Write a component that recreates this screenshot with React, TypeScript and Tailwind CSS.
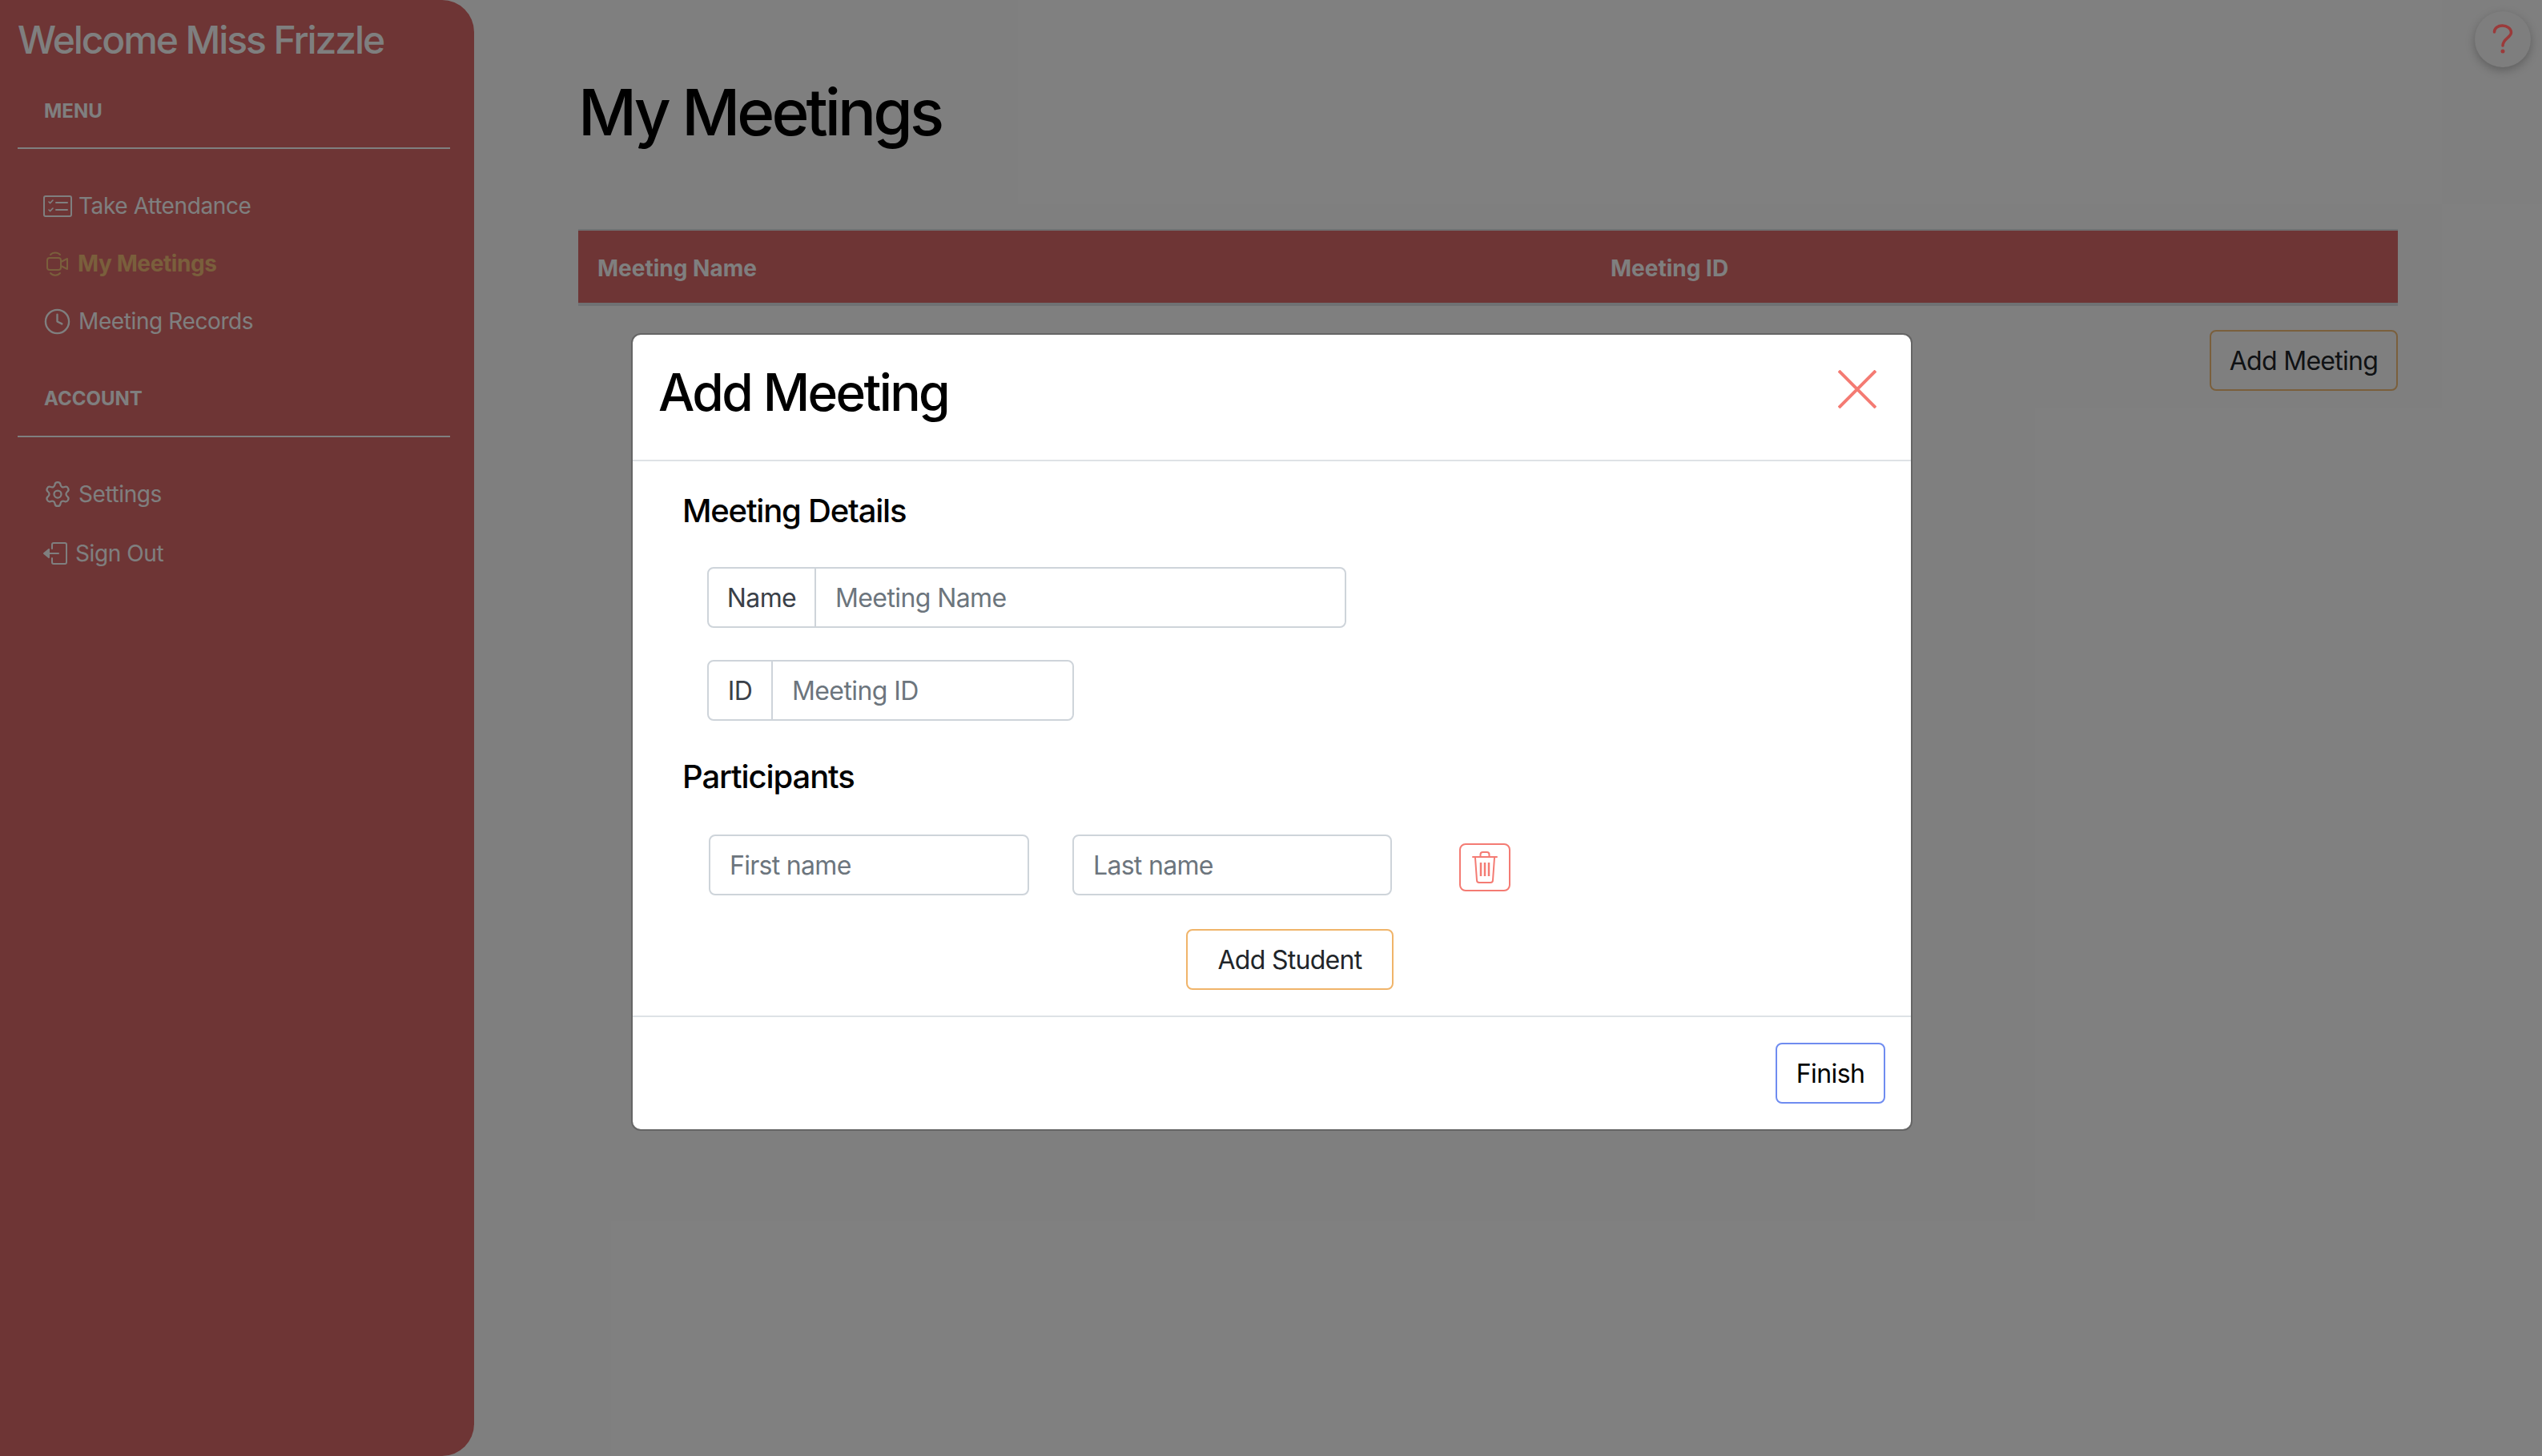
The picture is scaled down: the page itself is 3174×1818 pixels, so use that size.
// My Meetings page with the Add Meeting modal open
import React from 'react'
import { Clock, Settings } from 'lucide-react'

const ChecklistIcon = () => (
  <svg width="36" height="27" viewBox="0 0 36 27" fill="none" stroke="currentColor" strokeWidth="2" strokeLinecap="round" strokeLinejoin="round" className="shrink-0">
    <rect x="1" y="1" width="34" height="25" rx="2" />
    <path d="M7 8l1.6 1.6L12 6M7 18l1.6 1.6L12 16" strokeWidth="1.6" />
    <path d="M16 9h14M16 18h14" />
  </svg>
)

const VideoIcon = () => (
  <svg width="28" height="32" viewBox="0 0 28 32" fill="none" stroke="currentColor" strokeWidth="2" strokeLinecap="round" strokeLinejoin="round" className="shrink-0">
    <rect x="1" y="9" width="17" height="15" rx="3" />
    <path d="M18 14l8-4v13l-8-4" />
    <path d="M5 5c3-3.5 9-3.5 12 0M5 28c3 3.5 9 3.5 12 0" />
  </svg>
)

const SignOutIcon = () => (
  <svg width="30" height="28" viewBox="0 0 30 28" fill="none" stroke="currentColor" strokeWidth="2" strokeLinecap="round" strokeLinejoin="round" className="shrink-0">
    <path d="M11 8V3a2 2 0 0 1 2-2h14a2 2 0 0 1 2 2v22a2 2 0 0 1-2 2H13a2 2 0 0 1-2-2v-5" />
    <path d="M19 14H6" />
    <path d="M7 9v10l-6-5z" fill="currentColor" />
  </svg>
)

const TrashIcon = () => (
  <svg width="32" height="40" viewBox="0 0 32 40" fill="none" stroke="currentColor" strokeWidth="2" strokeLinecap="round" strokeLinejoin="round">
    <path d="M1 7h30" />
    <path d="M10.500 6V4a3 3 0 0 1 3-3h5a3 3 0 0 1 3 3v2" />
    <path d="M4 8l2 28a3 3 0 0 0 3 3h14a3 3 0 0 0 3-3l2-28" />
    <path d="M11 14v17M16 14v17M21 14v17" strokeLinecap="butt" strokeWidth="2.500" />
  </svg>
)

const menuItems = [
  { label: 'Take Attendance', icon: <ChecklistIcon />, pad: 'pl-[32px] gap-[8px]' },
  { label: 'My Meetings', icon: <VideoIcon />, active: true, pad: 'pl-[36px] gap-[11px]' },
  { label: 'Meeting Records', icon: <Clock size={35} strokeWidth={1.6} className="shrink-0" />, pad: 'pl-[32px] gap-[9px]' },
]

const accountItems = [
  { label: 'Settings', icon: <Settings size={36} strokeWidth={1.5} className="shrink-0" />, pad: 'pl-[32px] gap-[8px]' },
  { label: 'Sign Out', icon: <SignOutIcon />, pad: 'pl-[32px] gap-[10px] pt-[3px]' },
]

type NavItem = { label: string; icon: React.ReactNode; active?: boolean; pad: string }

function NavRow({ item }: { item: NavItem }) {
  return (
    <div className={`flex h-[72px] items-center text-[28px] ${item.pad} ${item.active ? 'font-bold text-[#f4be78]' : 'text-white'}`}>
      {item.icon}
      <span className="tracking-[-0.4px]">{item.label}</span>
    </div>
  )
}

function Sidebar() {
  return (
    <aside className="h-full w-[592px] shrink-0 rounded-r-[40px] bg-[#dc6a6a] pl-[22px] pr-[30px] text-white">
      <div className="flex h-[100px] items-center text-[48px] font-medium tracking-[-2.1px]">Welcome Miss Frizzle</div>
      <div className="flex h-[74px] items-center pl-[33px] pt-[3px] text-[24px] font-bold">MENU</div>
      <div className="mb-[35px] mt-[10px] h-[2px] bg-white" />
      {menuItems.map((item) => (
        <NavRow key={item.label} item={item} />
      ))}
      <div className="mt-[23px] flex h-[74px] items-center pl-[33px] pt-[1px] text-[24px] font-bold">ACCOUNT</div>
      <div className="mb-[35px] mt-[10px] h-[2px] bg-white" />
      {accountItems.map((item) => (
        <NavRow key={item.label} item={item} />
      ))}
    </aside>
  )
}

function AddMeetingModal() {
  return (
    <div className="absolute inset-0 bg-black/50">
      <div className="ml-[788px] mt-[416px] w-[1600px] rounded-[12px] border-2 border-black/20 bg-white bg-clip-padding text-black">
        {/* Header */}
        <div className="flex h-[158px] items-start justify-between border-b-2 border-[#dee2e6] pl-[32px] pr-[43px]">
          <h2 className="mt-[40px] flex h-[64px] items-center text-[64px] font-medium tracking-[-2.6px]">Add Meeting</h2>
          <svg width="48" height="48" viewBox="0 0 48 48" className="mt-[44px] text-[#f47b73]" stroke="currentColor" strokeWidth="4">
            <path d="M1 1l46 46M47 1L1 47" />
          </svg>
        </div>

        {/* Body */}
        <div className="pb-[32px] pl-[62px] pt-[38px]">
          <h3 className="flex h-[48px] items-center text-[40px] font-medium tracking-[-1.2px]">Meeting Details</h3>

          <div className="ml-[31px] mt-[46px] flex h-[76px] w-[798px] rounded-[8px] border-2 border-[#ced4da] text-[32px] tracking-[-0.6px]">
            <span className="flex w-[134px] shrink-0 items-center justify-center border-r-2 border-[#ced4da] pt-[1px] text-[#3a4048]">Name</span>
            <input placeholder="Meeting Name" className="w-full min-w-0 rounded-r-[8px] bg-white px-[24px] pt-[1px] outline-none placeholder:text-[#6c757d]" />
          </div>

          <div className="ml-[31px] mt-[40px] flex h-[76px] w-[458px] rounded-[8px] border-2 border-[#ced4da] text-[32px] tracking-[-0.6px]">
            <span className="flex w-[80px] shrink-0 items-center justify-center border-r-2 border-[#ced4da] pt-[1px] text-[#3a4048]">ID</span>
            <input placeholder="Meeting ID" className="w-full min-w-0 rounded-r-[8px] bg-white px-[24px] pt-[1px] outline-none placeholder:text-[#6c757d]" />
          </div>

          <h3 className="mt-[45px] flex h-[48px] items-center pt-[1px] text-[40px] font-medium tracking-[-1.1px]">Participants</h3>

          <div className="ml-[33px] mt-[49px] flex items-start">
            <input placeholder="First name" className="h-[76px] w-[400px] rounded-[8px] border-2 border-[#ced4da] bg-white px-[24px] text-[32px] tracking-[-0.7px] outline-none placeholder:text-[#6c757d]" />
            <input placeholder="Last name" className="ml-[54px] h-[76px] w-[399px] rounded-[8px] border-2 border-[#ced4da] bg-white px-[24px] text-[32px] tracking-[-0.7px] outline-none placeholder:text-[#6c757d]" />
            <button className="ml-[84px] mt-[11px] flex h-[60px] w-[64px] items-center justify-center rounded-[8px] border-2 border-[#f47b73] text-[#f47b73]">
              <TrashIcon />
            </button>
          </div>

          <button className="ml-[629px] mt-[42px] h-[76px] w-[259px] rounded-[8px] border-2 border-[#f0b46a] pt-[1px] text-[32px] tracking-[-0.7px] text-[#212529]">Add Student</button>
        </div>

        {/* Footer */}
        <div className="flex justify-end border-t-2 border-[#dee2e6] p-[32px]">
          <button className="h-[76px] w-[137px] rounded-[8px] border-2 border-[#6f8cf0] pt-[1px] text-[32px] tracking-[-0.6px] text-black">Finish</button>
        </div>
      </div>
    </div>
  )
}

export default function App() {
  return (
    <div className="relative flex h-[1818px] overflow-hidden bg-white font-['Inter','Liberation_Sans',sans-serif]">
      <Sidebar />

      <main className="ml-[130px] mr-[180px] flex flex-1 flex-col">
        <h1 className="mt-[92px] flex h-[96px] items-center text-[80px] font-medium tracking-[-3.9px] text-black">My Meetings</h1>

        <div className="mt-[98px] grid h-[96px] grid-cols-[1265px_1fr] items-center border-b-4 border-t-2 border-[#dee2e6] bg-[#dc6a6a] bg-clip-padding pt-[4px] text-[28px] font-bold text-white">
          <div className="pl-[24px]">Meeting Name</div>
          <div className="pl-[24px]">Meeting ID</div>
        </div>

        <button className="mt-[30px] h-[76px] w-[235px] self-end rounded-[8px] border-2 border-[#f4be78] pt-[1px] text-[32px] tracking-[-0.7px] text-[#212529]">Add Meeting</button>
      </main>

      <AddMeetingModal />

      {/* Help button sits above the backdrop */}
      <button className="absolute right-[14px] top-[14px] flex h-[70px] w-[70px] items-center justify-center rounded-full bg-[#7e7e7e] shadow-[0_4px_12px_rgba(0,0,0,0.25)]">
        <svg width="26" height="38" viewBox="0 0 26 38" fill="none" stroke="#9b3a3a" strokeWidth="3.500" strokeLinecap="round">
          <path d="M2.500 10C2.500 5 7 2 12.500 2S23.500 5.500 23.500 10.500C23.500 17 13 18 13 27" />
          <circle cx="13" cy="34" r="2.500" fill="#9b3a3a" stroke="none" />
        </svg>
      </button>
    </div>
  )
}
